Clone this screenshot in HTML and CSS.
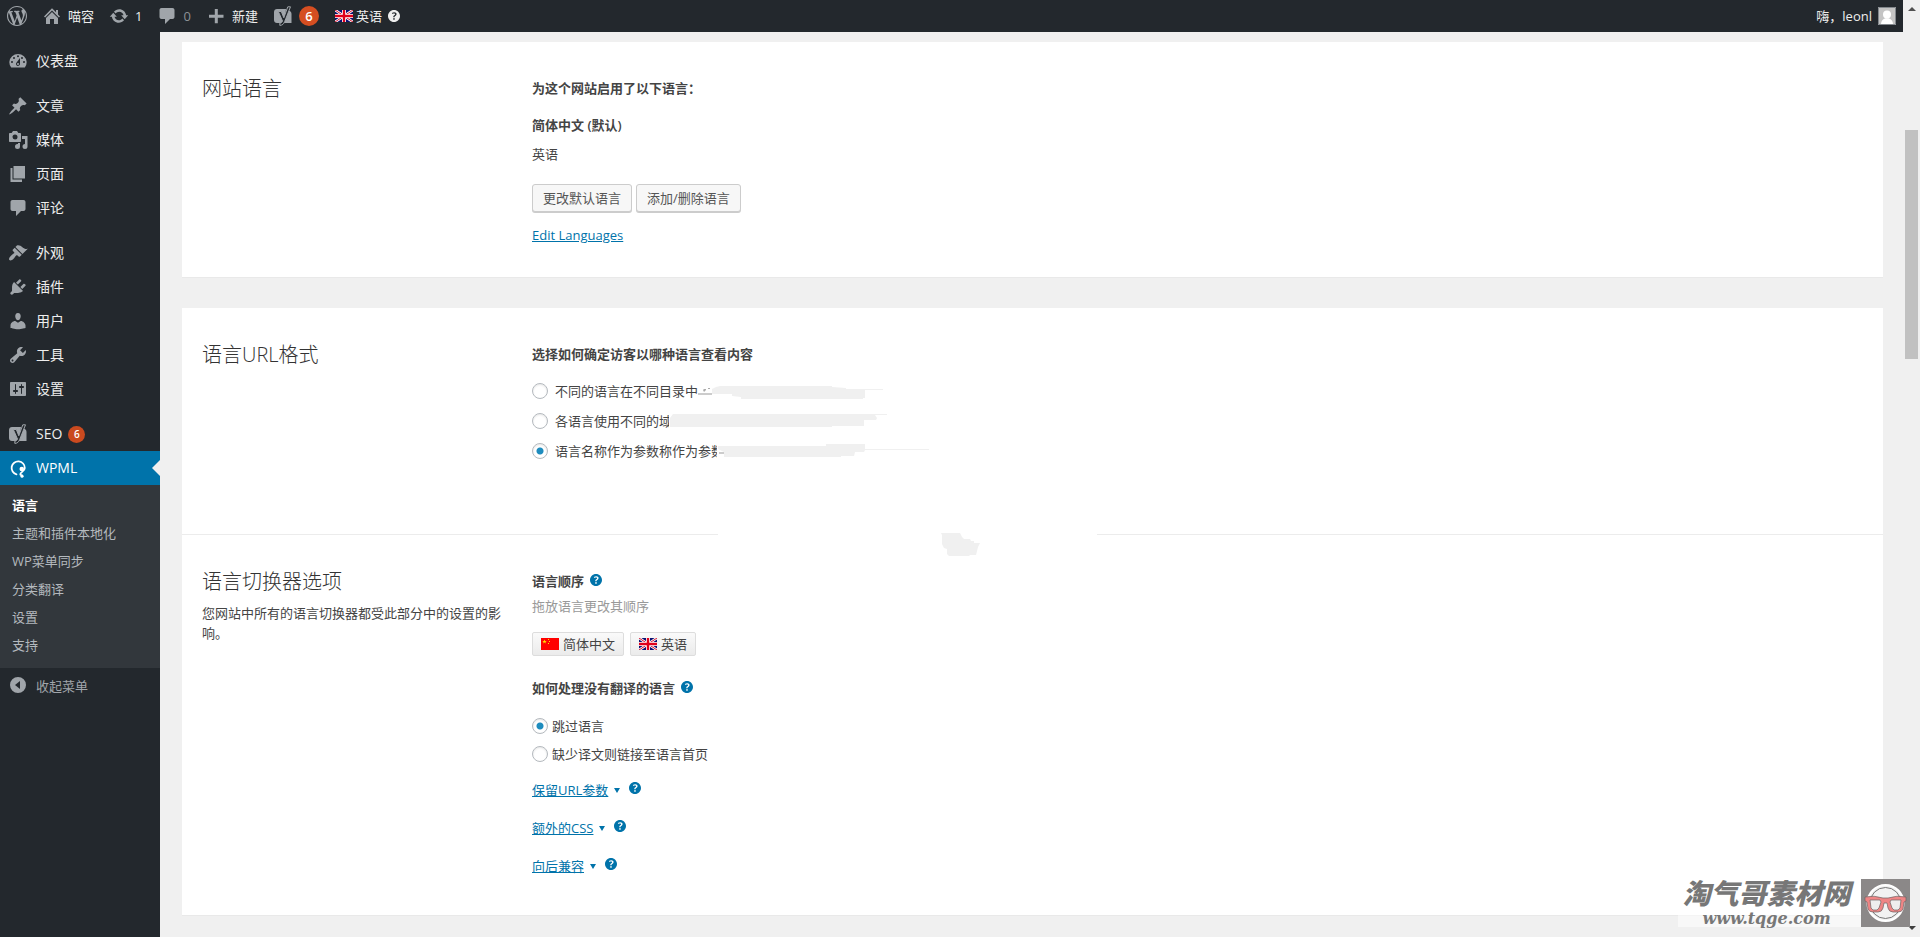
FILE: index.html
```html
<!DOCTYPE html>
<html lang="zh-CN">
<head>
<meta charset="utf-8">
<title>WPML 语言</title>
<link rel="stylesheet" href="styles.css">
</head>
<body>
<svg class="defs" aria-hidden="true">
  <symbol id="comment" viewBox="0 0 20 20"><path d="M4.5 2h11c1.1 0 2 .9 2 2v7c0 1.100-.9 2-2 2H13l-5 5v-5H4.500c-1.100 0-2-.9-2-2V4c0-1.100.9-2 2-2z"/></symbol>
  <symbol id="help" viewBox="3 3 14 14"><path d="M17 10c0-3.870-3.140-7-7-7-3.870 0-7 3.130-7 7s3.130 7 7 7c3.860 0 7-3.130 7-7zm-6.300 1.480H9.140v-.43c0-.38.08-.7.240-.98s.46-.57.880-.89c.41-.29.68-.53.810-.71.140-.18.2-.39.2-.62 0-.25-.09-.44-.28-.58-.19-.13-.45-.19-.79-.19-.58 0-1.250.19-2 .57l-.64-1.280c.87-.49 1.800-.74 2.770-.74.810 0 1.450.2 1.920.58.480.39.710.91.710 1.550 0 .43-.09.8-.29 1.110-.19.32-.57.67-1.110 1.060-.38.280-.61.490-.71.630-.1.150-.15.340-.15.570v.35zm-1.470 2.740c-.18-.17-.27-.42-.27-.73 0-.33.080-.58.260-.75s.43-.25.770-.25c.32 0 .57.090.750.260s.27.420.27.740c0 .3-.09.550-.27.720-.18.180-.43.270-.75.270-.33 0-.58-.09-.76-.26z"/></symbol>
  <symbol id="yoast" viewBox="0 0 20 20"><path d="M4 3h9l-1.500 14H4c-1.700 0-3-1.300-3-3V6c0-1.700 1.300-3 3-3zM15.500 4.500C17.500 5 18.500 6 18.500 8v9h-8z"/><path class="yoast-edge" d="M14.800.8h2.700l-5.800 14.700c-1 2.600-2.300 3.800-4.900 3.900v-2.200c1.500-.2 2.200-.9 2.700-2.200L5.300 5.500h3l2.500 6.300z"/></symbol>
  <symbol id="uk" viewBox="0 0 18 12"><path fill="#0a1172" d="M0 0h18v12H0z"/><path stroke="#fff" stroke-width="2.600" d="M0 0l18 12M18 0L0 12"/><path stroke="#d8102c" stroke-width="1" d="M0 0l18 12M18 0L0 12"/><path stroke="#fff" stroke-width="4" d="M9 0v12M0 6h18"/><path stroke="#e0001b" stroke-width="2.400" d="M9 0v12M0 6h18"/></symbol>
</svg>
<div class="window">
  <div class="page">
    <header class="bar">
      <a class="bar-item logo" href="#" aria-label="WordPress"><svg class="icon" viewBox="0 0 20 20"><path d="M20 10c0-5.510-4.490-10-10-10C4.480 0 0 4.490 0 10c0 5.520 4.480 10 10 10 5.510 0 10-4.480 10-10zM7.780 15.370L4.370 6.220c.55-.02 1.170-.08 1.170-.08.5-.06.44-1.130-.06-1.110 0 0-1.450.11-2.370.11-.18 0-.37 0-.58-.01C4.120 2.690 6.870 1.110 10 1.110c2.330 0 4.450.87 6.050 2.340-.68-.11-1.650.39-1.650 1.580 0 .74.450 1.360.9 2.100.35.610.55 1.360.55 2.460 0 1.490-1.400 5-1.400 5l-3.030-8.370c.54-.02.82-.17.82-.17.5-.05.44-1.250-.06-1.220 0 0-1.440.12-2.380.12-.87 0-2.330-.12-2.330-.12-.5-.03-.56 1.200-.06 1.220l.92.080 1.260 3.410zM17.410 10c.24-.64.740-1.870.430-4.250.7 1.290 1.050 2.710 1.050 4.250 0 3.290-1.730 6.240-4.400 7.780.97-2.590 1.940-5.200 2.920-7.780zM6.100 18.090C3.120 16.650 1.110 13.530 1.110 10c0-1.300.23-2.480.72-3.590C3.250 10.300 4.670 14.200 6.100 18.090zm4.030-6.630l2.580 6.980c-.86.290-1.760.450-2.710.450-.79 0-1.570-.11-2.290-.33.810-2.380 1.620-4.740 2.420-7.100z"/></svg></a>
      <a class="bar-item" href="#"><svg class="icon" viewBox="0 0 20 20"><path d="M16 8.500l2 2-1.100 1.100L10 4.600l-6.900 7L2 10.500l8-8.200 4 4V4h2zM10 6l6 6v6h-4v-5H8v5H4v-6z"/></svg>喵容</a>
      <a class="bar-item" href="#"><svg class="icon" viewBox="0 0 20 20"><path d="M10.200 3.280c3.530 0 6.430 2.610 6.920 6h2.080l-3.500 4-3.500-4h2.320c-.45-1.970-2.210-3.450-4.320-3.450-1.450 0-2.730.71-3.540 1.780L4.950 5.660C6.230 4.200 8.110 3.280 10.200 3.280zm-.4 13.440c-3.520 0-6.430-2.610-6.920-6H.8l3.500-4 3.500 4H5.480c.45 1.970 2.210 3.450 4.320 3.450 1.450 0 2.730-.71 3.540-1.780l1.710 1.950c-1.280 1.460-3.150 2.380-5.250 2.380z"/></svg>1</a>
      <a class="bar-item muted" href="#"><svg class="icon"><use href="#comment"/></svg>0</a>
      <a class="bar-item" href="#"><svg class="icon" viewBox="0 0 20 20"><path d="M17.500 8.700v3h-5.700v5.500h-3v-5.500H3v-3h5.800V3h3v5.700z"/></svg>新建</a>
      <a class="bar-item" href="#" aria-label="SEO"><svg class="icon"><use href="#yoast"/></svg><span class="badge badge-lg">6</span></a>
      <a class="bar-item lang" href="#"><svg class="bar-flag"><use href="#uk"/></svg>英语<svg class="help-light"><use href="#help"/></svg></a>
      <a class="bar-item account" href="#">嗨，leonl<svg class="avatar" viewBox="0 0 18 18"><path fill="#c4c4c4" d="M0 0h18v18H0z"/><circle cx="9" cy="7.500" r="4" fill="#fff"/><path fill="#fff" d="M3 17c0-3 2-5 4.500-5.800h3C13 12 15 14 15 17z"/><path fill="none" stroke="#82878c" d="M.5.500h17v17H.500z"/></svg></a>
    </header>
    <div class="body">
      <nav class="side">
        <ul class="menu">
          <li><a href="#"><svg class="icon" viewBox="0 0 20 20"><path fill-rule="evenodd" d="M3.200 16.500h13.600A8.700 8.700 0 0 0 18.700 11 8.700 8.700 0 0 0 10 3a8.700 8.700 0 0 0-8.700 8 8.700 8.700 0 0 0 1.900 5.500zM10 4.300a1 1 0 1 1 0 2 1 1 0 0 1 0-2zM6 6a1 1 0 1 1 0 2 1 1 0 0 1 0-2zm8 0a1 1 0 1 1 0 2 1 1 0 0 1 0-2zm-5.400 5.500L12 7v6a2 2 0 1 1-3.400-1.500zM4 10a1 1 0 1 1 0 2 1 1 0 0 1 0-2zm12 0a1 1 0 1 1 0 2 1 1 0 0 1 0-2zm-5 3a1 1 0 1 0-2 0 1 1 0 0 0 2 0z"/></svg>仪表盘</a></li>
          <li class="group"><a href="#"><svg class="icon" viewBox="0 0 20 20"><path d="M10.440 3.020l1.820-1.820 6.360 6.350-1.830 1.820c-1.050-.68-2.480-.57-3.410.36l-.75.75c-.92.930-1.040 2.350-.35 3.410l-1.830 1.820-2.410-2.410-2.800 2.790c-.42.420-3.380 2.710-3.800 2.290s1.860-3.390 2.280-3.810l2.790-2.790L4.100 9.360l1.830-1.820c1.050.69 2.480.57 3.400-.36l.75-.75c.93-.92 1.050-2.350.36-3.410z"/></svg>文章</a></li>
          <li><a href="#"><svg class="icon" viewBox="0 0 20 20"><path fill-rule="evenodd" d="M13 11V4c0-.55-.45-1-1-1h-1.670L9 1H5L3.670 3H2c-.55 0-1 .45-1 1v7c0 .55.450 1 1 1h10c.55 0 1-.45 1-1zM7 4.500a2.500 2.500 0 1 1 0 5 2.500 2.500 0 0 1 0-5zM14 6h5.500v10.500a2.500 2.500 0 1 1-2.500-2.500V9h-3zM10 14.050V13h2v3.500A2.500 2.500 0 1 1 9.500 14z"/></svg>媒体</a></li>
          <li><a href="#"><svg class="icon" viewBox="0 0 20 20"><path d="M5.500 14.500V2H17v12.500zM4.500 15.500H14V18H2.500V4h2z"/></svg>页面</a></li>
          <li><a href="#"><svg class="icon"><use href="#comment"/></svg>评论</a></li>
          <li class="group"><a href="#"><svg class="icon" viewBox="0 0 20 20"><path d="M14.480 11.060L7.410 3.990l1.500-1.500c.5-.56 2.300-.47 3.510.32 1.210.8 1.430 1.280 2.910 2.100 1.180.64 2.450 1.260 4.450.85zm-.71.71L6.700 4.700 4.930 6.470c-.39.390-.39 1.020 0 1.410l1.060 1.060c.39.390.39 1.030 0 1.420-.6.600-1.430 1.110-2.210 1.690-.35.260-.7.530-1.010.840C1.430 14.230.4 16.080 1.400 17.070c.99 1 2.840-.03 4.180-1.360.31-.31.58-.66.850-1.020.57-.78 1.080-1.610 1.690-2.210.39-.39 1.020-.39 1.410 0l1.060 1.060c.39.390 1.020.39 1.410 0z"/></svg>外观</a></li>
          <li><a href="#"><svg class="icon" viewBox="0 0 20 20"><path d="M13.110 4.360L9.870 7.600 8 5.730l3.240-3.240c.35-.34 1.050-.2 1.560.32.520.51.660 1.210.31 1.550zm-8 1.770l.91-1.120 9.010 9.010-1.190.84c-.71.710-2.630 1.160-3.820 1.160H6.140L4.900 17.260c-.59.590-1.540.59-2.120 0-.59-.58-.59-1.530 0-2.120l1.240-1.240v-3.880c0-1.130.4-3.190 1.090-3.890zm7.260 3.970l3.240-3.240c.34-.35 1.040-.21 1.550.31.520.51.660 1.210.31 1.550l-3.240 3.250z"/></svg>插件</a></li>
          <li><a href="#"><svg class="icon" viewBox="0 0 20 20"><path d="M10 9.250c-2.270 0-2.730-3.440-2.730-3.440C7 4.020 7.820 2 9.970 2c2.160 0 2.980 2.020 2.710 3.810 0 0-.41 3.440-2.680 3.440zm0 2.570L12.720 10c2.390 0 4.800 2.330 4.800 4.530v2.490S13.600 18.200 10 18.200s-7.500-1.180-7.500-1.180v-2.490c0-2.250 2.200-4.480 4.730-4.480z"/></svg>用户</a></li>
          <li><a href="#"><svg class="icon" viewBox="0 0 20 20"><path d="M16.680 9.770c-1.340 1.340-3.300 1.670-4.950.99l-5.410 6.520c-.99.990-2.590.99-3.580 0s-.99-2.590 0-3.570l6.520-5.420c-.68-1.650-.35-3.610.99-4.950 1.280-1.280 3.120-1.620 4.720-1.060l-2.890 2.890 2.820 2.820 2.860-2.870c.53 1.580.18 3.390-1.080 4.650zM3.810 16.210c.4.390 1.040.39 1.430 0 .4-.4.400-1.040 0-1.430-.39-.4-1.030-.4-1.430 0-.39.390-.39 1.030 0 1.430z"/></svg>工具</a></li>
          <li><a href="#"><svg class="icon" viewBox="0 0 20 20"><path d="M18 16V4c0-.55-.45-1-1-1H3c-.55 0-1 .45-1 1v12c0 .55.450 1 1 1h14c.55 0 1-.45 1-1zM8 11h1c.55 0 1 .45 1 1s-.45 1-1 1H8v1.500c0 .28-.22.5-.5.500s-.5-.22-.5-.5V13H6c-.55 0-1-.45-1-1s.45-1 1-1h1V5.500c0-.28.22-.5.500-.5s.5.220.5.500V11zm5-2h-1c-.55 0-1-.45-1-1s.45-1 1-1h1V5.500c0-.28.22-.5.500-.5s.5.220.5.500V7h1c.55 0 1 .45 1 1s-.45 1-1 1h-1v5.500c0 .28-.22.5-.5.500s-.5-.22-.5-.5V9z"/></svg>设置</a></li>
          <li class="group"><a href="#"><svg class="icon"><use href="#yoast"/></svg>SEO<span class="badge">6</span></a></li>
          <li class="current"><a href="#"><svg class="icon" viewBox="0 0 20 20"><path fill="none" stroke="#fff" stroke-width="1.800" stroke-linecap="round" d="M8.500 16.300A6.600 6.600 0 1 1 16.800 10c0 3.500-4.500 4-4.500 6.200 0 1.300 2 .5 2.200 1.800"/><circle cx="13.800" cy="11" r="2.300"/><circle cx="14" cy="18.300" r="1.500"/></svg>WPML</a></li>
        </ul>
        <ul class="submenu">
          <li><a class="on" href="#">语言</a></li>
          <li><a href="#">主题和插件本地化</a></li>
          <li><a href="#">WP菜单同步</a></li>
          <li><a href="#">分类翻译</a></li>
          <li><a href="#">设置</a></li>
          <li><a href="#">支持</a></li>
        </ul>
        <button class="collapse" type="button"><svg class="icon" viewBox="0 0 20 20"><path fill-rule="evenodd" d="M10 2a8 8 0 1 1 0 16 8 8 0 0 1 0-16zm2 4l-5 4 5 4z"/></svg>收起菜单</button>
      </nav>
      <main class="content">
        <section class="card">
          <div class="section">
            <div class="intro"><h2>网站语言</h2></div>
            <div class="fields">
              <h3>为这个网站启用了以下语言：</h3>
              <ul class="langs"><li class="default">简体中文 (默认)</li><li>英语</li></ul>
              <div class="buttons"><button class="btn" type="button">更改默认语言</button><button class="btn" type="button">添加/删除语言</button></div>
              <p class="edit"><a class="link" href="#">Edit Languages</a></p>
            </div>
          </div>
        </section>
        <section class="card">
          <div class="section url">
            <div class="intro"><h2>语言URL格式</h2></div>
            <div class="fields">
              <h3>选择如何确定访客以哪种语言查看内容</h3>
              <div class="radios">
                <label><input type="radio" name="url">不同的语言在不同目录中<svg class="smudge" width="190" height="18" viewBox="698 382 190 18"><path fill="#ccc" d="M698 393h14v2h-14z"/><path fill="#aaa" d="M703 390l1-1h2v1l-2 2zM708 388h2v1h-2z"/><path fill="#f0f0f0" d="M712 389l4-2 4-1h112v1l14 1v1h37v1h-18v8h-2v1H741v-2l-9-1v-2h-20z"/></svg></label>
                <label><input type="radio" name="url">各语言使用不同的域<svg class="smudge over-sm" width="220" height="18" viewBox="668 412 220 18"><path fill="#fff" d="M669 412h6v18h-6z"/><path fill="#f0f0f0" d="M670 418l3-4h214v1h-12l2 3-1 2h-12v6h-32v1H670z"/></svg></label>
                <label><input type="radio" name="url" checked>语言名称作为参数称作为参数<svg class="smudge over" width="215" height="18" viewBox="716 442 215 18"><path fill="#fff" d="M717 442h10v18h-10z"/><path fill="#ccc" d="M719 452h5v2h-5z"/><path fill="#f0f0f0" d="M718 446h108v-2h39v5h64v1h-64l-1 2h-9l-1 4h-13v1H724v-5l-6-3z"/></svg></label>
              </div>
            </div>
          </div>
          <div class="divider"><svg class="blot" width="42" height="24" viewBox="941 532 42 24"><path fill="#f0f0f0" d="M943 533h19l2 4 2 2h6l1 2h3v2h6l-2 4-2 8h-6l-1 1h-20l-2-2v-5l-3-1-2-4v-9z"/></svg></div>
          <div class="section">
            <div class="intro"><h2>语言切换器选项</h2><p>您网站中所有的语言切换器都受此部分中的设置的影响。</p></div>
            <div class="fields">
              <h3>语言顺序<svg class="help"><use href="#help"/></svg></h3>
              <p class="hint">拖放语言更改其顺序</p>
              <ul class="chips">
                <li><svg class="flag" viewBox="0 0 18 12"><path fill="#f00" d="M0 0h18v12H0z"/><path fill="#fd0" d="M3.500 1.500l.6 1.500h1.600l-1.300 1 .5 1.500-1.400-.9-1.400.9.5-1.500-1.300-1h1.600zM7 1h1v1H7zM8 3h1v1H8zM7 5h1v1H7z"/></svg>简体中文</li>
                <li><svg class="flag"><use href="#uk"/></svg>英语</li>
              </ul>
              <h3 class="missing">如何处理没有翻译的语言<svg class="help"><use href="#help"/></svg></h3>
              <div class="radios tight">
                <label><input type="radio" name="missing" checked>跳过语言</label>
                <label><input type="radio" name="missing">缺少译文则链接至语言首页</label>
              </div>
              <div class="toggles">
                <p><a class="link" href="#">保留URL参数</a><span class="caret"></span><svg class="help"><use href="#help"/></svg></p>
                <p><a class="link" href="#">额外的CSS</a><span class="caret"></span><svg class="help"><use href="#help"/></svg></p>
                <p><a class="link" href="#">向后兼容</a><span class="caret"></span><svg class="help"><use href="#help"/></svg></p>
              </div>
            </div>
          </div>
        </section>
      </main>
    </div>
  </div>
  <div class="scroll" aria-hidden="true"><span class="arrow up"></span><span class="thumb"></span><span class="arrow down"></span></div>
</div>
<div class="watermark">
  <div class="mark-text"><strong>淘气哥素材网</strong><em>www.tqge.com</em></div>
  <svg class="mark-logo" viewBox="0 0 49 48"><path fill="#8b8888" d="M0 0h49v48H0z"/><circle cx="24.500" cy="24" r="18" fill="#f2f2f2" stroke="#fff" stroke-width="2"/><circle cx="24.500" cy="24" r="15.500" fill="none" stroke="#777" /><path fill="#ef8585" stroke="#6d6464" stroke-width=".7" d="M4 18q9-2 18 1h5q9-3 18-1v4l-2 1-1 7q-1 3-5 3h-5q-4 0-5-4l-1-5h-3l-1 5q-1 4-5 4h-5q-4 0-5-3l-1-7-2-1z"/><path fill="#eee" stroke="#6d6464" stroke-width=".7" d="M9 21h10l1 2-2 6-2 2h-4l-2-2zM30 21h10l-1 8-2 2h-4l-2-2-2-6z"/></svg>
</div>
</body>
</html>
```
FILE: styles.css
```css
* { box-sizing: border-box; }
body, h2, h3, p, ul { margin: 0; padding: 0; }
ul { list-style: none; }
body {
  background: #f0f0f0;
  color: #444;
  font: 13px/18px "Open Sans", "Noto Sans CJK SC", sans-serif;
}
a { color: inherit; text-decoration: none; }
svg { flex: none; }
.defs { position: absolute; width: 0; height: 0; }

.window { display: flex; height: 100vh; overflow: hidden; }
.page { flex: 1; min-width: 0; display: flex; flex-direction: column; }
.icon { width: 20px; height: 20px; fill: #a0a5aa; }
.yoast-edge { fill: #23282d; stroke: #a0a5aa; stroke-width: 1; }

/* Toolbar */
.bar { display: flex; flex: none; height: 32px; background: #23282d; color: #eee; }
.bar-item { display: flex; align-items: center; gap: 6px; padding: 0 7px 0 8px; }
.logo { padding-left: 7px; }
.muted { color: #8c9196; }
.badge {
  display: inline-block;
  width: 17px;
  margin-left: 6px;
  border-radius: 50%;
  background: #ca4a1f;
  color: #fff;
  font: 600 10px/17px "Open Sans", sans-serif;
  text-align: center;
}
.badge-lg { width: 20px; margin: 0; background: #d54e21; font-size: 13px; line-height: 20px; }
.lang { gap: 3px; margin-left: 1px; }
.bar-flag { width: 18px; height: 12px; }
.help-light { width: 12px; height: 12px; margin-left: 3px; fill: #eee; }
.account { margin-left: auto; }
.avatar { width: 18px; height: 18px; }

/* Side menu */
.body { flex: 1; display: flex; min-height: 0; }
.side { flex: none; width: 160px; padding-top: 12px; background: #23282d; color: #eee; }
.menu a, .collapse { display: flex; align-items: center; gap: 8px; height: 34px; padding-left: 8px; font-size: 14px; }
.group { margin-top: 11px; }
.menu .badge { margin-left: -2px; }
.current { position: relative; background: #0073aa; color: #fff; }
.current .icon { fill: #fff; }
.current::after {
  content: "";
  position: absolute;
  top: 9px;
  right: 0;
  border: 8px solid transparent;
  border-left: 0;
  border-right-color: #f0f0f0;
}
.submenu { padding: 6px 0 9px; background: #32373c; color: #b4b9be; }
.submenu a { display: block; padding: 5px 12px; }
.submenu .on { color: #fff; font-weight: 600; }
.collapse { width: 100%; border: 0; background: none; color: #a0a5aa; font-family: inherit; font-size: 13px; }

/* Cards */
.content { flex: 1; min-width: 0; padding: 10px 20px 0 22px; }
.card { margin-bottom: 31px; background: #fff; box-shadow: 0 1px 0 #e9e9e9; }
.section { display: flex; padding: 34px 20px 33px; }
.intro { flex: none; width: 330px; padding-right: 30px; }
.fields { flex: 1; padding-top: 3px; }
h2 { color: #333; font-size: 20px; font-weight: 300; line-height: 26px; }
h3 { display: flex; align-items: center; font-size: 13px; font-weight: 600; line-height: 18px; }
.intro p { margin-top: 8px; line-height: 20px; }
.langs { display: grid; gap: 11px; margin: 19px 0 21px; }
.default { font-weight: 600; }
.buttons { display: flex; gap: 4px; }
.btn {
  height: 28px;
  padding: 0 10px;
  border: 1px solid #ccc;
  border-radius: 3px;
  background: #f7f7f7;
  box-shadow: 0 1px 0 #ccc;
  color: #555;
  font: inherit;
}
.edit { margin-top: 14px; }
.link { color: #0073aa; text-decoration: underline; }

.radios { display: grid; gap: 12px; margin-top: 19px; }
.radios label { display: flex; align-items: center; height: 18px; }
input[type="radio"] {
  appearance: none;
  flex: none;
  width: 16px;
  height: 16px;
  margin: 0 7px 0 0;
  border: 1px solid #b4b9be;
  border-radius: 50%;
  background: #fff;
  box-shadow: inset 0 1px 2px rgba(0, 0, 0, .1);
}
input[type="radio"]:checked { background: radial-gradient(circle, #1e8cbe 3px, #fff 4px); }
.tight { gap: 10px; margin-top: 20px; }
.tight input[type="radio"] { margin-right: 4px; }
.over-sm { margin-left: -4px; }
.over { margin-left: -8px; }
.url { padding-bottom: 74px; }
.divider { display: flex; height: 1px; }
.divider::before, .divider::after { content: ""; background: #ececec; }
.divider::before { width: 536px; }
.divider::after { flex: 1; margin-left: 116px; }
.blot { margin: -2px 0 0 221px; }

.help { width: 12px; height: 12px; margin: 0 0 2px 6px; fill: #0073aa; }
.hint { margin-top: 7px; color: #999; }
.chips { display: flex; gap: 6px; margin: 17px 0 23px; }
.chips li {
  display: flex;
  align-items: center;
  gap: 4px;
  height: 24px;
  padding: 0 8px;
  border: 1px solid #ddd;
  border-radius: 2px;
  background: linear-gradient(#fafafa, #ebebeb);
}
.flag { width: 18px; height: 12px; }
.toggles { display: grid; gap: 20px; margin: 18px 0 7px; }
.toggles p { display: flex; align-items: center; }
.toggles .help { margin: 0 0 4px 9px; }
.caret { margin-left: 6px; border: 3px solid transparent; border-top: 5px solid #0073aa; border-bottom: 0; }

/* Scrollbar */
.scroll { display: flex; flex-direction: column; align-items: center; flex: none; width: 17px; padding: 7px 0; background: #f0f0f0; }
.arrow { border: 4px solid transparent; }
.up { border-top: 0; border-bottom-color: #505050; }
.down { margin-top: auto; border-bottom: 0; border-top-color: #404040; }
.thumb { width: 13px; height: 229px; margin-top: 119px; background: #c1c1c1; }

/* Watermark */
.watermark {
  position: absolute;
  right: 10px;
  bottom: 10px;
  display: flex;
  background: rgba(255, 255, 255, .5);
}
.mark-text { display: flex; flex-direction: column; align-items: center; width: 183px; padding-right: 6px; color: #777; }
.mark-text strong { font: italic 900 28px/31px "Liberation Sans", "Noto Sans CJK SC", sans-serif; }
.mark-text em { font: italic bold 16px/17px "Liberation Serif", serif; }
.mark-text em { font-family: "DejaVu Serif", serif; }
.mark-logo { width: 49px; height: 48px; }
```
